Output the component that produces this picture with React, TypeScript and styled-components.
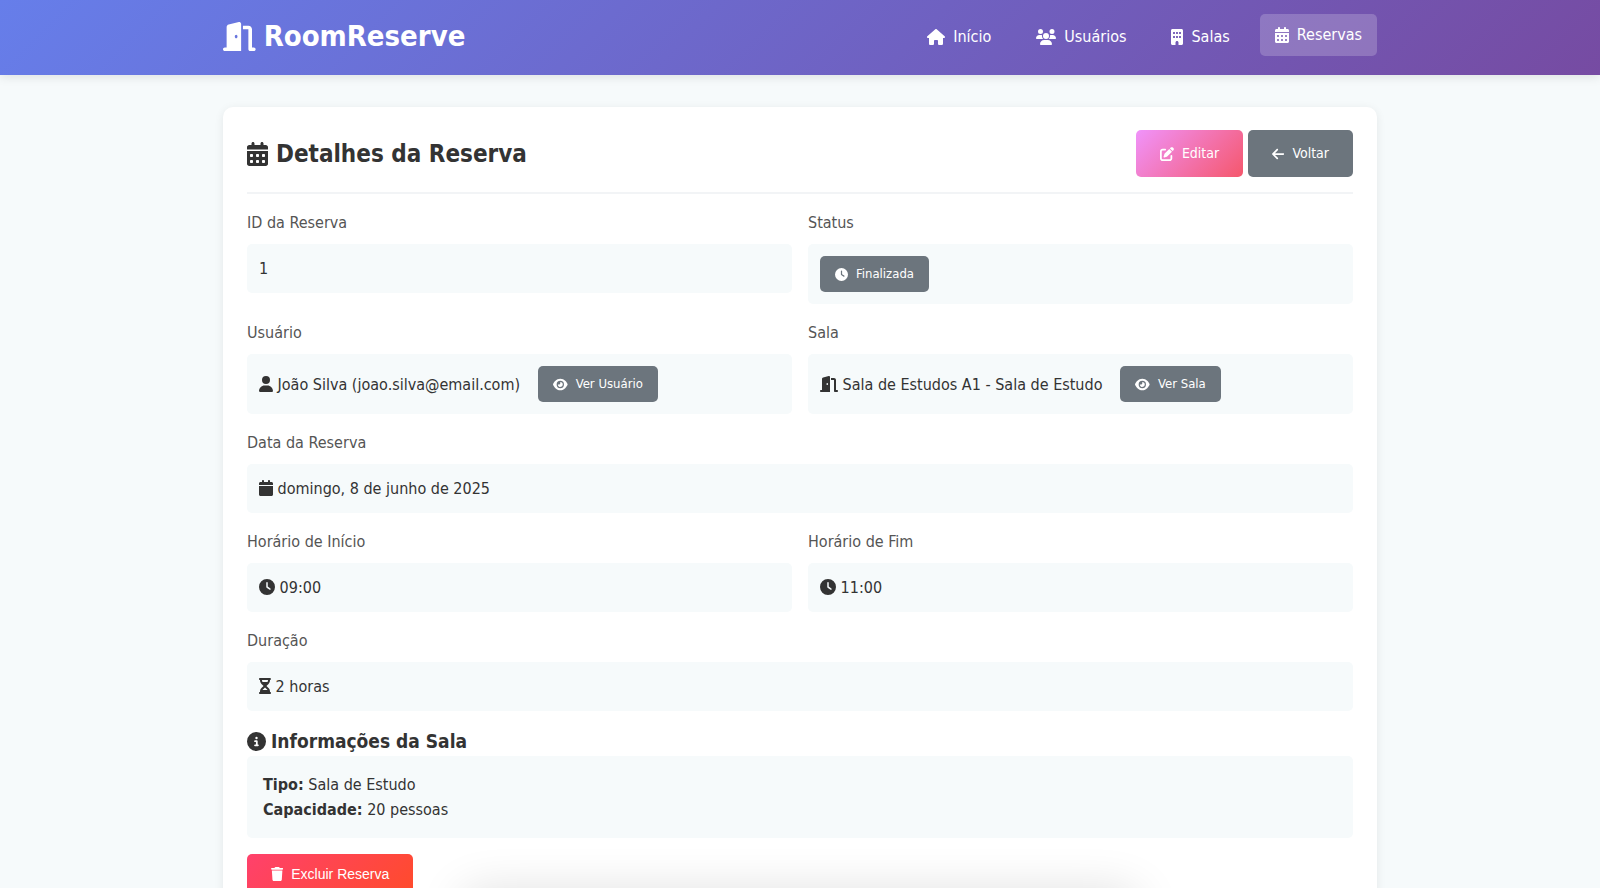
import React from "react";
import styled, { createGlobalStyle, css } from "styled-components";
import type { IconType } from "react-icons";
import {
  FaArrowLeft,
  FaBuilding,
  FaCalendar,
  FaCalendarDays,
  FaCircleInfo,
  FaClock,
  FaDoorOpen,
  FaEye,
  FaHourglassHalf,
  FaHouse,
  FaPenToSquare,
  FaTrash,
  FaUser,
  FaUsers,
} from "react-icons/fa6";

const GlobalStyle = createGlobalStyle`
  *, *::before, *::after {
    box-sizing: border-box;
    margin: 0;
    padding: 0;
  }

  body {
    background: #f6fafb;
    color: #333;
    font-family: Tahoma, "DejaVu Sans Condensed", "DejaVu Sans", sans-serif;
    font-size: 16px;
    line-height: 25px;
  }
`;

/* The icon set draws every glyph 512 units high, with a width of its own. */
const glyph = (icon: IconType, units: number) => styled(icon)`
  flex: none;
  width: auto;
  height: 1em;
  aspect-ratio: ${units} / 512;
  vertical-align: -2px;
`;

const ArrowLeftIcon = glyph(FaArrowLeft, 448);
const BuildingIcon = glyph(FaBuilding, 384);
const CalendarIcon = glyph(FaCalendar, 448);
const CalendarDaysIcon = glyph(FaCalendarDays, 448);
const InfoIcon = glyph(FaCircleInfo, 512);
const ClockIcon = glyph(FaClock, 512);
const DoorIcon = glyph(FaDoorOpen, 576);
const EyeIcon = glyph(FaEye, 576);
const HourglassIcon = glyph(FaHourglassHalf, 384);
const HouseIcon = glyph(FaHouse, 576);
const EditIcon = glyph(FaPenToSquare, 512);
const TrashIcon = glyph(FaTrash, 448);
const UserIcon = glyph(FaUser, 448);
const UsersIcon = glyph(FaUsers, 640);

const Header = styled.header`
  background: linear-gradient(135deg, #667eea 0%, #764ba2 100%);
  box-shadow: 0 2px 10px rgba(0, 0, 0, 0.1);
  color: #fff;
`;

const HeaderInner = styled.div`
  display: flex;
  align-items: center;
  justify-content: space-between;
  max-width: 1154px;
  margin: 0 auto;
  padding: 15px 0 17px;
`;

const Logo = styled.a`
  display: flex;
  align-items: center;
  gap: 8px;
  color: inherit;
  font-size: 29px;
  font-weight: 700;
  line-height: 43px;
  text-decoration: none;
`;

const Nav = styled.nav`
  display: flex;
  gap: 15px;
`;

const NavLink = styled.a<{ $active?: boolean }>`
  display: flex;
  align-items: center;
  gap: 8px;
  padding: 8px 15px;
  border-radius: 5px;
  color: inherit;
  line-height: 26px;
  text-decoration: none;
  ${({ $active }) =>
    $active &&
    css`
      background: rgba(255, 255, 255, 0.2);
      transform: translateY(-2px);
    `}
`;

const Main = styled.main`
  max-width: 1154px;
  margin: 32px auto;
`;

const Card = styled.section`
  display: flex;
  flex-direction: column;
  gap: 16px;
  padding: 23px 24px;
  border-radius: 10px;
  background: #fff;
  box-shadow: 0 2px 10px rgba(0, 0, 0, 0.08);
`;

const CardHeader = styled.div`
  display: flex;
  align-items: center;
  justify-content: space-between;
  padding-bottom: 15px;
  border-bottom: 2px solid #f2f4f6;
`;

const Title = styled.h1`
  display: flex;
  align-items: center;
  gap: 8px;
  font-size: 24px;
  line-height: 38px;
`;

const Actions = styled.div`
  display: flex;
  gap: 5px;
`;

const variants = {
  edit: "linear-gradient(135deg, #f093fb 0%, #f5576c 100%)",
  neutral: "#6c757d",
  danger: "linear-gradient(135deg, #ff416c 0%, #ff4b2b 100%)",
};

const buttonStyle = css<{ $variant: keyof typeof variants; $small?: boolean }>`
  display: inline-flex;
  align-items: center;
  gap: 8px;
  padding: ${({ $small }) => ($small ? "8px 15px" : "12px 24px")};
  border: 0;
  border-radius: 5px;
  background: ${({ $variant }) => variants[$variant]};
  color: #fff;
  font-size: ${({ $small }) => ($small ? "13px" : "14px")};
  line-height: ${({ $small }) => ($small ? "20px" : "23px")};
  text-decoration: none;
  white-space: nowrap;
`;

const ButtonLink = styled.a`
  ${buttonStyle}
`;

const StatusBadge = styled.span`
  ${buttonStyle}
`;

const DeleteButton = styled.button`
  ${buttonStyle}
  align-self: flex-start;
  font-family: Arial, "Liberation Sans", sans-serif;
  line-height: 16px;
  cursor: pointer;
`;

const Row = styled.div`
  display: grid;
  grid-auto-columns: minmax(0, 1fr);
  grid-auto-flow: column;
  align-items: start;
  gap: 16px;
`;

const FieldLabel = styled.div`
  margin-bottom: 8px;
  color: #555;
  line-height: 26px;
`;

const FieldValue = styled.div`
  display: flex;
  align-items: center;
  gap: 18px;
  padding: 12px;
  border-radius: 5px;
  background: #f6fafb;
`;

const SectionTitle = styled.h2`
  display: flex;
  align-items: center;
  gap: 5px;
  font-size: 19px;
  line-height: 29px;
`;

const InfoBox = styled.div`
  padding: 16px;
  border-radius: 5px;
  background: #f6fafb;
`;

const DockShadow = styled.div`
  position: fixed;
  bottom: -40px;
  left: 29%;
  right: 29%;
  height: 32px;
  border-radius: 16px;
  box-shadow: 0 0 48px 4px rgba(0, 0, 0, 0.14);
  pointer-events: none;
`;

function Field({ label, children }: { label: string; children: React.ReactNode }) {
  return (
    <div>
      <FieldLabel>{label}</FieldLabel>
      <FieldValue>{children}</FieldValue>
    </div>
  );
}

export default function App() {
  return (
    <>
      <GlobalStyle />
      <Header>
        <HeaderInner>
          <Logo href="#">
            <DoorIcon />
            RoomReserve
          </Logo>
          <Nav>
            <NavLink href="#">
              <HouseIcon />
              Início
            </NavLink>
            <NavLink href="#usuarios">
              <UsersIcon />
              Usuários
            </NavLink>
            <NavLink href="#salas">
              <BuildingIcon />
              Salas
            </NavLink>
            <NavLink href="#reservas" $active>
              <CalendarDaysIcon />
              Reservas
            </NavLink>
          </Nav>
        </HeaderInner>
      </Header>

      <Main>
        <Card>
          <CardHeader>
            <Title>
              <CalendarDaysIcon />
              Detalhes da Reserva
            </Title>
            <Actions>
              <ButtonLink href="#editar" $variant="edit">
                <EditIcon />
                Editar
              </ButtonLink>
              <ButtonLink href="#reservas" $variant="neutral">
                <ArrowLeftIcon />
                Voltar
              </ButtonLink>
            </Actions>
          </CardHeader>

          <Row>
            <Field label="ID da Reserva">1</Field>
            <Field label="Status">
              <StatusBadge $variant="neutral" $small>
                <ClockIcon />
                Finalizada
              </StatusBadge>
            </Field>
          </Row>

          <Row>
            <Field label="Usuário">
              <span>
                <UserIcon /> João Silva (joao.silva@email.com)
              </span>
              <ButtonLink href="#usuario" $variant="neutral" $small>
                <EyeIcon />
                Ver Usuário
              </ButtonLink>
            </Field>
            <Field label="Sala">
              <span>
                <DoorIcon /> Sala de Estudos A1 - Sala de Estudo
              </span>
              <ButtonLink href="#sala" $variant="neutral" $small>
                <EyeIcon />
                Ver Sala
              </ButtonLink>
            </Field>
          </Row>

          <Row>
            <Field label="Data da Reserva">
              <span>
                <CalendarIcon /> domingo, 8 de junho de 2025
              </span>
            </Field>
          </Row>

          <Row>
            <Field label="Horário de Início">
              <span>
                <ClockIcon /> 09:00
              </span>
            </Field>
            <Field label="Horário de Fim">
              <span>
                <ClockIcon /> 11:00
              </span>
            </Field>
          </Row>

          <Row>
            <Field label="Duração">
              <span>
                <HourglassIcon /> 2 horas
              </span>
            </Field>
          </Row>

          <div>
            <SectionTitle>
              <InfoIcon />
              Informações da Sala
            </SectionTitle>
            <InfoBox>
              <p>
                <strong>Tipo:</strong> Sala de Estudo
              </p>
              <p>
                <strong>Capacidade:</strong> 20 pessoas
              </p>
            </InfoBox>
          </div>

          <DeleteButton type="button" $variant="danger">
            <TrashIcon />
            Excluir Reserva
          </DeleteButton>
        </Card>
      </Main>
      <DockShadow />
    </>
  );
}
